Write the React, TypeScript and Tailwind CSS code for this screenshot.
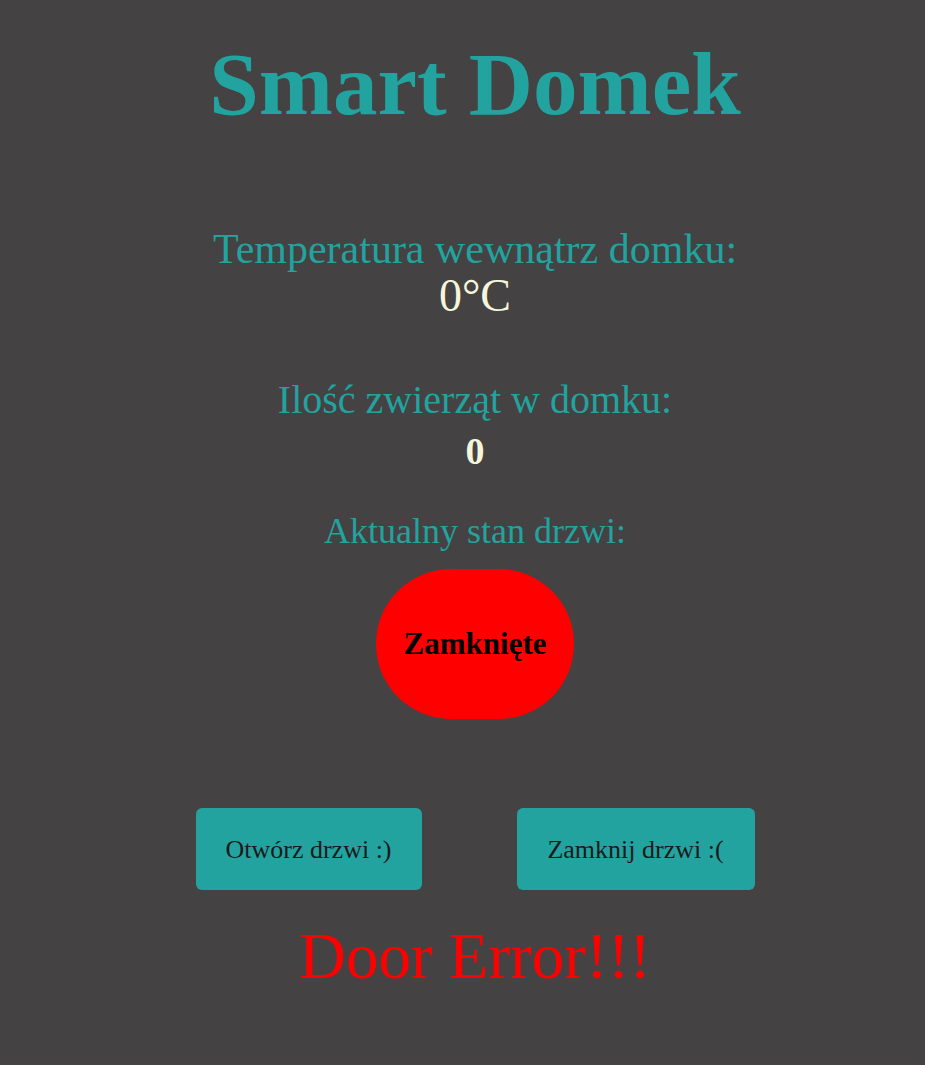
import React from 'react';

export default function App() {
  const serif = "font-['Georgia','Liberation_Serif','DejaVu_Serif',serif]";

  return (
    <div className={`min-h-[1065px] w-full bg-[#444242] pl-[25px] flex flex-col items-center ${serif}`}>
      {/* Header */}
      <h1 className="mt-[38px] text-[89px] leading-[92px] font-bold text-[#22a39f]">Smart Domek</h1>

      {/* Temperature */}
      <div className="mt-[96px] flex flex-col items-center">
        <p className="text-[42px] leading-[46px] text-[#22a39f]">Temperatura wewnątrz domku:</p>
        <p className="text-[46px] leading-[48px] text-[#f5f5dc]">0°C</p>
      </div>

      {/* Animals */}
      <div className="mt-[57px] flex flex-col items-center">
        <p className="text-[40px] leading-[46px] text-[#22a39f]">Ilość zwierząt w domku:</p>
        <p className="text-[38px] leading-[56px] font-bold text-[#f5f5dc]">0</p>
      </div>

      {/* Door state */}
      <p className="mt-[32px] text-[36px] leading-[40px] text-[#22a39f]">Aktualny stan drzwi:</p>
      <div className="mt-[18px] flex h-[150px] w-[198px] items-center justify-center rounded-full bg-[#ff0000]">
        <span className="text-[31px] font-bold text-black">Zamknięte</span>
      </div>

      {/* Controls */}
      <div className="mt-[89px] flex gap-[95px]">
        <button className="h-[82px] w-[226px] rounded-[6px] bg-[#22a39f] text-[26px] text-[#1a1a1a]">
          Otwórz drzwi :)
        </button>
        <button className="h-[82px] w-[238px] rounded-[6px] bg-[#22a39f] text-[26px] text-[#1a1a1a]">
          Zamknij drzwi :(
        </button>
      </div>

      <p className="mt-[30px] font-['Liberation_Serif',serif] text-[65px] leading-[72px] text-[#ff0000]">Door Error!!!</p>
    </div>
  );
}
